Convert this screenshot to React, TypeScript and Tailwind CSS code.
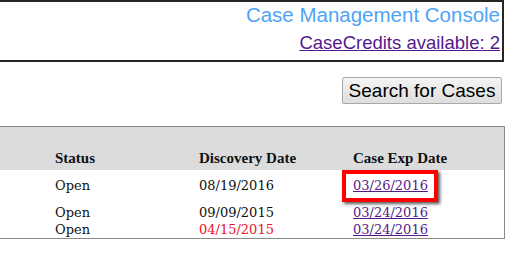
import React from 'react';

const serif = { fontFamily: '"DejaVu Serif", serif' };

const rows = [
  { status: 'Open', discovered: '08/19/2016', expires: '03/26/2016', late: false, flagged: true },
  { status: 'Open', discovered: '09/09/2015', expires: '03/24/2016', late: false, flagged: false },
  { status: 'Open', discovered: '04/15/2015', expires: '03/24/2016', late: true, flagged: false },
];

export default function App() {
  return (
    <div className="w-[517px] h-[264px] bg-white overflow-hidden font-['Liberation_Sans',Arial,sans-serif]">
      {/* Header box */}
      <div className="-ml-[2px] mr-[13px] h-[62px] border-2 border-[#262626] flex flex-col items-end pr-[2px]">
        <div className="text-[20.5px] leading-[24px] text-[#4ea3f5] mt-[1px]">Case Management Console</div>
        <a href="#" className="text-[18.5px] leading-[22px] text-[#551a8b] underline mt-[5px]">
          CaseCredits available: 2
        </a>
      </div>

      {/* Search button */}
      <div className="flex justify-end mr-[15px] mt-[15px]">
        <button className="h-[27px] w-[160px] border border-[#a9a9a9] rounded-[2px] bg-gradient-to-b from-[#f4f4f4] to-[#dedede] text-[19px] leading-[25px] text-black">
          Search for Cases
        </button>
      </div>

      {/* Case table */}
      <div className="-ml-[2px] mr-[12px] mt-[22px] border border-[#8a8a8a]">
        <div className="h-[43px] bg-[#dcdcdc] flex items-end pb-[3px] pl-[56px] font-['Liberation_Serif',serif] font-bold text-[15px] leading-[17px] text-[#111]">
          <div className="w-[144px]">Status</div>
          <div className="w-[154px]">Discovery Date</div>
          <div>Case Exp Date</div>
        </div>
        {rows.map((r, i) => (
          <div
            key={i}
            style={serif}
            className={`flex pl-[56px] text-[13px] text-[#111] ${r.flagged ? 'h-[34px] items-start leading-[32px]' : 'h-[17px] items-center leading-[17px]'}`}
          >
            <div className="w-[144px]">{r.status}</div>
            <div className={`w-[154px] ${r.late ? 'text-[#f0102a]' : ''}`}>{r.discovered}</div>
            {r.flagged ? (
              <div className="-ml-[11px] h-[32px] border-4 border-[#ff0000] pl-[7px] pr-[6px] leading-[24px] shadow-[2px_2px_3px_rgba(0,0,0,0.65)]">
                <a href="#" className="text-[#551a8b] underline">{r.expires}</a>
              </div>
            ) : (
              <a href="#" className="text-[#551a8b] underline">{r.expires}</a>
            )}
          </div>
        ))}
      </div>
    </div>
  );
}
